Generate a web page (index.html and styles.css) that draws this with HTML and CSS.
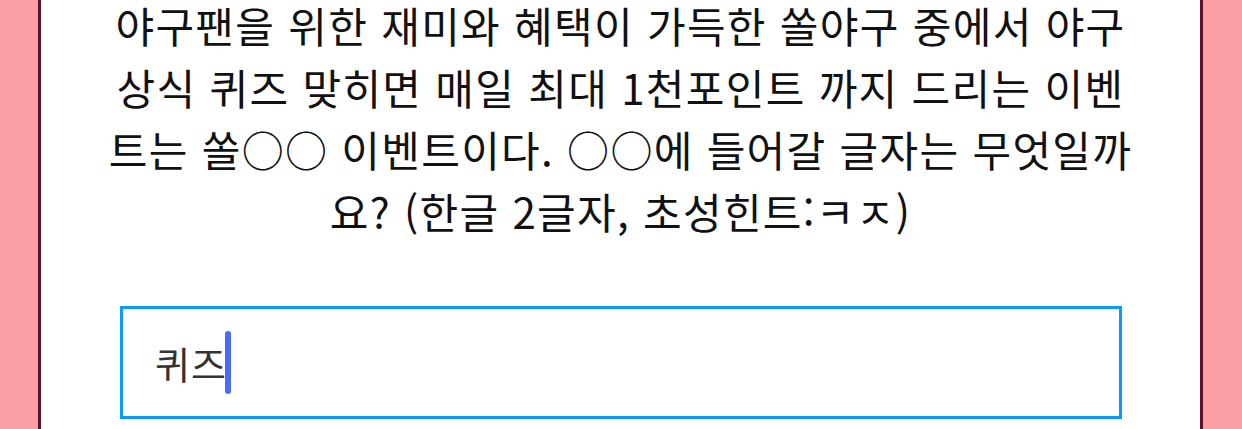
FILE: index.html
```html
<!DOCTYPE html>
<html lang="ko">
<head>
<meta charset="utf-8">
<link rel="stylesheet" href="styles.css">
</head>
<body>
<main class="card">
  <p class="question">야구팬을 위한 재미와 혜택이 가득한 쏠야구 중에서 야구<br>상식 퀴즈 맞히면 매일 최대 1천포인트 까지 드리는 이벤<br>트는 쏠○○ 이벤트이다. ○○에 들어갈 글자는 무엇일까<br>요? (한글 2글자, 초성힌트:ㅋㅈ)</p>
  <div class="answer">
    <span class="answer-text">퀴즈</span><span class="caret"></span>
  </div>
</main>
</body>
</html>
```

FILE: styles.css
```css
html, body {
  margin: 0;
  padding: 0;
  height: 100%;
  overflow: hidden;
}

body {
  background: #fa9ea4;
  font-family: "Noto Sans CJK KR", "Noto Sans", sans-serif;
}

.card {
  box-sizing: border-box;
  margin-left: 38px;
  width: 1165px;
  height: 100%;
  background: #ffffff;
  border-left: 3px solid #5c0f2c;
  border-right: 3px solid #5c0f2c;
  display: flex;
  flex-direction: column;
}

.question {
  margin: -6px 0 0;
  padding: 0 10px;
  text-align: center;
  font-size: 42px;
  line-height: 62px;
  letter-spacing: 1.3px;
  color: #111111;
  white-space: nowrap;
}

.answer {
  box-sizing: border-box;
  margin: 64px 78px 0 79px;
  height: 113px;
  border: 3px solid #0d9bfb;
  display: flex;
  align-items: center;
  padding-left: 32px;
}

.answer-text {
  font-size: 38px;
  color: #333333;
  line-height: 1;
  letter-spacing: 1px;
  margin-right: -2px;
}

.caret {
  display: inline-block;
  width: 6px;
  height: 63px;
  border-radius: 3px;
  background: #4a6cf5;
}
```
